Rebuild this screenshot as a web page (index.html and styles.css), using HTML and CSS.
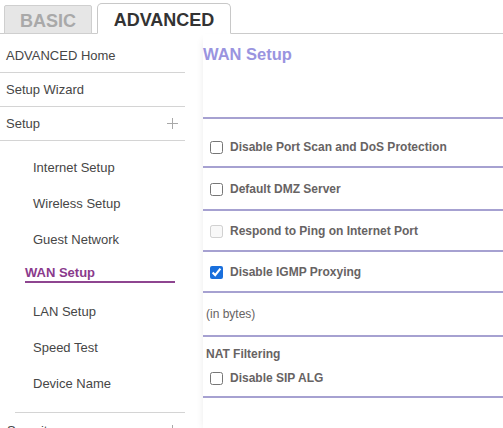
FILE: index.html
```html
<!DOCTYPE html>
<html>
<head>
<meta charset="utf-8">
<link rel="stylesheet" href="styles.css">
</head>
<body>
<div class="tabbar">
  <div class="tab tab-basic">BASIC</div>
  <div class="tab tab-adv">ADVANCED</div>
</div>
<div class="main">
  <nav class="sidebar">
    <div class="item">ADVANCED Home</div>
    <div class="item">Setup Wizard</div>
    <div class="item has-plus">Setup <svg class="plus" width="11" height="11" viewBox="0 0 11 11"><path d="M5.5 0V11M0 5.5H11" stroke="#a8a8a8" stroke-width="1"/></svg></div>
    <div class="submenu">
      <div class="sub">Internet Setup</div>
      <div class="sub">Wireless Setup</div>
      <div class="sub">Guest Network</div>
      <div class="sub sub-active"><span>WAN Setup</span></div>
      <div class="sub">LAN Setup</div>
      <div class="sub">Speed Test</div>
      <div class="sub">Device Name</div>
    </div>
    <div class="divider"></div>
    <div class="item item-last has-plus">Security <svg class="plus" width="11" height="11" viewBox="0 0 11 11"><path d="M5.5 0V11M0 5.5H11" stroke="#a8a8a8" stroke-width="1"/></svg></div>
  </nav>
  <section class="content">
    <div class="head"><h1 class="title">WAN Setup</h1></div>
    <div class="row row1"><label class="opt"><input type="checkbox"><span>Disable Port Scan and DoS Protection</span></label></div>
    <div class="row row2"><label class="opt"><input type="checkbox"><span>Default DMZ Server</span></label></div>
    <div class="row row3"><label class="opt"><input type="checkbox" disabled><span>Respond to Ping on Internet Port</span></label></div>
    <div class="row row3"><label class="opt"><input type="checkbox" checked><span>Disable IGMP Proxying</span></label></div>
    <div class="row row5"><div class="plain">(in bytes)</div></div>
    <div class="row row6">
      <div class="subhead">NAT Filtering</div>
      <label class="opt opt-gap"><input type="checkbox"><span>Disable SIP ALG</span></label>
    </div>
  </section>
</div>
</body>
</html>
```

FILE: styles.css
```css
* { box-sizing: border-box; }
html, body { margin: 0; padding: 0; background: #fff; }
body {
  font-family: "Liberation Sans", Arial, sans-serif;
  width: 503px;
  height: 428px;
  overflow: hidden;
}

.tabbar {
  display: flex;
  align-items: flex-end;
  gap: 5px;
  height: 34px;
  padding-left: 4px;
  border-bottom: 1px solid #cccccc;
}
.tab {
  font-weight: bold;
  font-size: 18px;
  line-height: 20px;
  text-align: center;
  margin-bottom: -1px;
}
.tab-basic {
  width: 88px;
  height: 29px;
  padding-top: 5px;
  background: #e6e6e6;
  color: #a9a9a9;
  border: 1px solid #cfcfcf;
  border-radius: 2px 2px 0 0;
}
.tab-adv {
  width: 134px;
  height: 31px;
  padding-top: 6px;
  background: #fff;
  color: #333333;
  border: 1px solid #c8c8c8;
  border-bottom-color: #fff;
  border-radius: 5px 5px 0 0;
}

.main {
  display: flex;
  align-items: flex-start;
}

.sidebar {
  width: 185px;
  flex: none;
  padding-top: 5px;
  color: #464646;
  font-size: 13px;
}
.item {
  height: 34px;
  line-height: 33px;
  padding-left: 6px;
  border-bottom: 1px solid #d4d4d4;
  display: flex;
  align-items: center;
  justify-content: space-between;
  padding-right: 7px;
}
.item-last { border-bottom: none; padding-left: 7px; }
.plus { display: block; }

.submenu { padding-top: 9px; }
.sub {
  height: 36px;
  line-height: 36px;
  padding-left: 33px;
}
.sub-active {
  padding-left: 25px;
  padding-top: 7px;
  line-height: 16px;
}
.sub-active span {
  display: block;
  width: 150px;
  font-weight: bold;
  color: #8a3a8c;
  border-bottom: 2px solid #8e4590;
}
.divider {
  margin: 10px 0 0 15px;
  border-top: 1px solid #d4d4d4;
}

.content {
  flex: 1;
  margin-left: 18px;
  min-height: 400px;
  box-shadow: -5px 0 8px -6px rgba(0, 0, 0, 0.10);
}
.head {
  height: 85px;
  padding-top: 10px;
  border-bottom: 2px solid #a6a1d1;
}
.title {
  margin: 0;
  font-size: 16.5px;
  line-height: 20px;
  font-weight: bold;
  color: #9a94df;
}
.row {
  border-bottom: 2px solid #a6a1d1;
  padding-left: 3px;
  font-size: 12px;
  color: #676363;
}
.row1 { padding-top: 20px; padding-bottom: 11px; }
.row2 { padding-top: 13px; padding-bottom: 12px; }
.row3 { padding-top: 12px; padding-bottom: 11px; }
.row5 { padding-top: 13px; padding-bottom: 13px; }
.row6 { padding-top: 9px; padding-bottom: 10px; }

.opt {
  display: flex;
  align-items: center;
  height: 16px;
  font-weight: bold;
}
.opt input {
  width: 13px;
  height: 13px;
  margin: 0 0 0 4px;
  accent-color: #1a6fdc;
}
.opt span { margin-left: 7px; }
.opt-gap { margin-top: 8px; }
.plain { line-height: 16px; }
.subhead { line-height: 16px; font-weight: bold; }
```
